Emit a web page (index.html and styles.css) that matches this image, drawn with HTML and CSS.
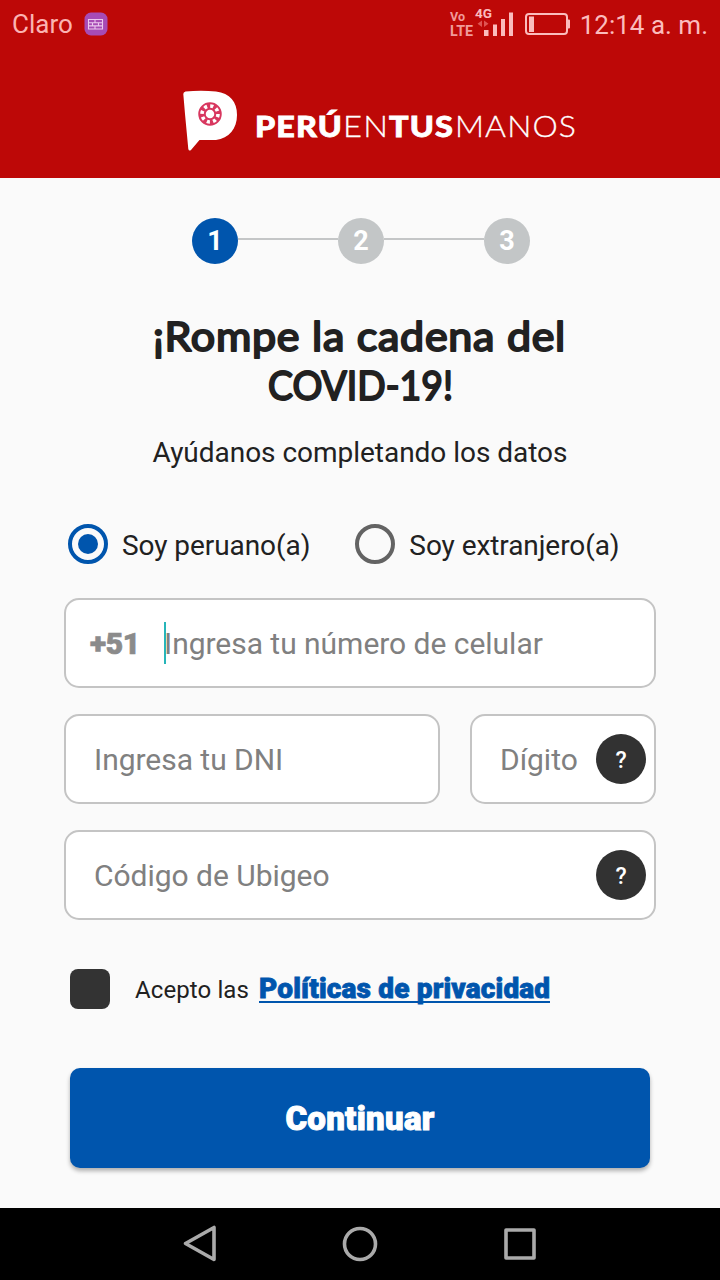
FILE: index.html
```html
<!DOCTYPE html>
<html lang="es">
<head>
<meta charset="utf-8">
<title>Perú en tus manos</title>
<link rel="stylesheet" href="styles.css">
</head>
<body>
<div class="screen">
  <header class="header">
    <div class="status">
      <div class="carrier"><span class="carrier-name">Claro</span>
        <svg class="badge" viewBox="0 0 24 24"><rect x=".5" y=".5" width="23" height="23" rx="6.5" fill="#a74bb5"/><path d="M4.500 7.500H18.500V17H4.500ZM4.500 10.700H18.500M4.500 13.900H18.500M11 7.500V10.700M8.500 10.700V13.900M14.500 10.700V13.900M11 13.900V17" fill="none" stroke="#ecc8ee" stroke-width="1.100"/></svg>
      </div>
      <div class="indicators">
        <svg class="signal" viewBox="0 0 124 34">
          <text class="signal-text" x="1" y="15" font-size="12" textLength="15" lengthAdjust="spacingAndGlyphs">Vo</text>
          <text class="signal-text" x="1" y="29.500" font-size="14.5" textLength="23" lengthAdjust="spacingAndGlyphs">LTE</text>
          <text class="signal-text network" x="26" y="12" font-size="13" textLength="17" lengthAdjust="spacingAndGlyphs">4G</text>
          <path d="M33 14.500V21L28.500 17.800ZM35 14.500V21L39.500 17.800Z" fill="#df5553"/>
          <path d="M35 24h4.500v6H35zM44 18.500h4V30h-4zM52 13h4v17h-4zM60 6.500h4v23.500h-4z" fill="#fbbcbd"/>
          <rect x="77" y="8" width="41" height="20" rx="3" fill="none" stroke="#fbbcbd" stroke-width="2"/>
          <path d="M80 10.500h5V26h-5zM118 13.500h2q1 0 1 1v7q0 1-1 1h-2z" fill="#fbbcbd"/>
        </svg>
        <span class="time">12:14 a. m.</span>
      </div>
    </div>
    <svg class="logo" viewBox="0 0 400 66" role="img" aria-label="Perú en tus manos">
      <path d="M5.500 5.500Q21 4 36 5.500C50 7 57 16 57 29C57 43 49 52 36 54H19.500L11 64Q9 65.500 8.300 63L5 28L3.300 8Q3.300 6 5.500 5.500Z" fill="#fff"/>
      <circle cx="30" cy="28" r="8" fill="none" stroke="#d8375f" stroke-width="7.500"/>
      <circle cx="30" cy="28" r="8" fill="none" stroke="#fff" stroke-width="3.600" stroke-dasharray="3.140 3.140"/>
      <text class="word-bold" x="75" y="50.500" textLength="88" lengthAdjust="spacingAndGlyphs">PERÚ</text>
      <text class="word-light" x="163" y="50.500" textLength="46" lengthAdjust="spacingAndGlyphs">EN</text>
      <text class="word-bold" x="209" y="50.500" textLength="65" lengthAdjust="spacingAndGlyphs">TUS</text>
      <text class="word-light" x="275" y="50.500" textLength="122" lengthAdjust="spacingAndGlyphs">MANOS</text>
    </svg>
  </header>

  <main class="content">
    <ol class="steps">
      <li class="step active">1</li>
      <li class="line"></li>
      <li class="step">2</li>
      <li class="line"></li>
      <li class="step">3</li>
    </ol>
    <h1 class="title">
      <svg class="title-art" viewBox="0 0 440 100">
        <text class="tracked" x="13" y="40.500" textLength="413" lengthAdjust="spacingAndGlyphs">¡Rompe la cadena del</text>
        <text x="128" y="90" textLength="185" lengthAdjust="spacingAndGlyphs">COVID-19!</text>
      </svg>
    </h1>
    <p class="subtitle">Ayúdanos completando los datos</p>

    <div class="radios">
      <div class="radio checked"><span class="ring"></span><span class="radio-label">Soy peruano(a)</span></div>
      <div class="radio"><span class="ring"></span><span class="radio-label">Soy extranjero(a)</span></div>
    </div>

    <div class="fields">
      <div class="field phone"><span class="prefix">+51</span><span class="caret"></span><span class="placeholder">Ingresa tu número de celular</span></div>
      <div class="row">
        <div class="field dni"><span class="placeholder">Ingresa tu DNI</span></div>
        <div class="field digit"><span class="placeholder">Dígito</span><span class="help">?</span></div>
      </div>
      <div class="field"><span class="placeholder">Código de Ubigeo</span><span class="help">?</span></div>
    </div>

    <div class="accept"><span class="checkbox"></span><span class="accept-text">Acepto las</span><a class="policy">Políticas de privacidad</a></div>
    <div class="button"><span class="button-label">Continuar</span></div>
  </main>

  <nav class="navbar">
    <svg class="nav-icon" viewBox="0 0 40 40"><path d="M34 3.500V35.500L5.500 19.500Z"/></svg>
    <svg class="nav-icon" viewBox="0 0 40 40"><circle cx="20" cy="20" r="15.500"/></svg>
    <svg class="nav-icon" viewBox="0 0 40 40"><rect x="6" y="6" width="28" height="28"/></svg>
  </nav>
</div>
</body>
</html>
```
FILE: styles.css
```css
* { box-sizing: border-box; }
body { margin: 0; font-family: Roboto, "Liberation Sans", sans-serif; color: #212121; }
.screen { width: 720px; height: 1280px; display: flex; flex-direction: column; background: #fafafa; overflow: hidden; }

.header { height: 178px; background: #bd0807; display: flex; flex-direction: column; }
.status { height: 48px; padding: 0 12px; display: flex; justify-content: space-between; align-items: center; color: #fbb3b2; }
.carrier { display: flex; align-items: center; gap: 11px; }
.carrier-name { font-size: 26px; line-height: 32px; }
.badge { width: 24px; height: 24px; }
.indicators { display: flex; align-items: center; gap: 7px; color: #fbbcbd; }
.signal { width: 124px; height: 34px; margin-top: -2px; }
.signal-text { font-weight: 700; fill: #f19a9a; }
.signal-text.network { fill: #fbbcbd; }
.time { font-size: 26px; line-height: 32px; padding-top: 2px; white-space: nowrap; }
.logo { width: 400px; height: 66px; margin: 38px 0 0 180px; }
.word-bold { font: 900 29px Lato, sans-serif; letter-spacing: 1px; fill: #fff; stroke: #fff; stroke-width: .8px; }
.word-light { font: 300 29px Lato, sans-serif; letter-spacing: 1px; fill: #fff; stroke: #fff; stroke-width: .3px; }

.content { flex: 1; padding: 40px 64px 0; display: flex; flex-direction: column; }
.steps { margin: 0; padding: 0 0 0 128px; list-style: none; display: flex; }
.step { width: 46px; height: 46px; border-radius: 50%; background: #c3c6c7; color: #fff; font-weight: 700; font-size: 27px; line-height: 47px; text-align: center; }
.step.active { background: #0055ad; }
.line { width: 100px; height: 2px; margin-top: 20px; background: #c4c6c7; }
.title { margin: 46px 0 0; height: 100px; display: flex; justify-content: center; }
.title-art { width: 440px; height: 100px; font: 400 41px Lato, sans-serif; fill: #212121; stroke: #212121; stroke-width: 2px; stroke-linejoin: round; }
.tracked { letter-spacing: .7px; }
.subtitle { margin: 26px 0 0; font-size: 28px; line-height: 34px; letter-spacing: -.03px; text-align: center; }

.radios { display: flex; height: 40px; margin-top: 54px; padding-left: 4px; gap: 45px; }
.radio { display: flex; gap: 14px; align-items: center; }
.ring { width: 40px; height: 40px; border: 4px solid #636363; border-radius: 50%; display: grid; place-items: center; }
.checked .ring { border-color: #0055ad; }
.checked .ring::before { content: ""; width: 20px; height: 20px; border-radius: 50%; background: #0055ad; }
.radio-label { font-size: 28px; line-height: 34px; padding-top: 4px; letter-spacing: -.07px; white-space: nowrap; }

.fields { display: flex; flex-direction: column; gap: 26px; margin-top: 34px; }
.row { display: flex; gap: 30px; }
.field { height: 90px; border: 2px solid #c4c4c4; border-radius: 15px; background: #fff; display: flex; align-items: center; padding: 0 8px 0 28px; }
.dni { flex: 1; }
.digit { width: 186px; }
.placeholder { font-size: 30px; line-height: 36px; padding-top: 2px; letter-spacing: -.03px; color: #808080; white-space: nowrap; }
.phone { padding-left: 24px; }
.prefix { width: 74px; font-size: 30px; font-weight: 900; letter-spacing: -.3px; color: #8b8b8b; -webkit-text-stroke: .7px #8b8b8b; }
.caret { width: 2px; height: 42px; margin-right: -2px; background: #26b5b9; }
.help { width: 50px; height: 50px; margin-left: auto; border-radius: 50%; background: #323232; color: #fff; font-size: 23px; font-weight: 500; line-height: 53px; text-align: center; }

.accept { display: flex; align-items: center; height: 40px; margin-top: 49px; padding-left: 6px; }
.checkbox { width: 40px; height: 40px; margin-right: 25px; border-radius: 8px; background: #333; }
.accept-text { width: 124px; font-size: 24px; line-height: 30px; padding-top: 2px; letter-spacing: .1px; white-space: nowrap; }
.policy { font-size: 28px; font-weight: 900; line-height: 26px; color: #0055ad; border-bottom: 2px solid #0055ad; height: 27px; letter-spacing: .17px; -webkit-text-stroke: .8px #0055ad; white-space: nowrap; }
.button { height: 100px; margin: 59px 6px 0; border-radius: 10px; background: #0055ad; color: #fff; box-shadow: 0 3px 4px rgba(0,0,0,.3); display: flex; align-items: center; justify-content: center; }
.button-label { font-size: 33px; font-weight: 900; line-height: 40px; padding-top: 2px; letter-spacing: .3px; -webkit-text-stroke: 1px #fff; }

.navbar { height: 72px; background: #000; display: flex; justify-content: center; align-items: center; gap: 120px; }
.nav-icon { width: 40px; height: 40px; fill: none; stroke: #aaa; stroke-width: 3.6; stroke-linejoin: round; }
```
